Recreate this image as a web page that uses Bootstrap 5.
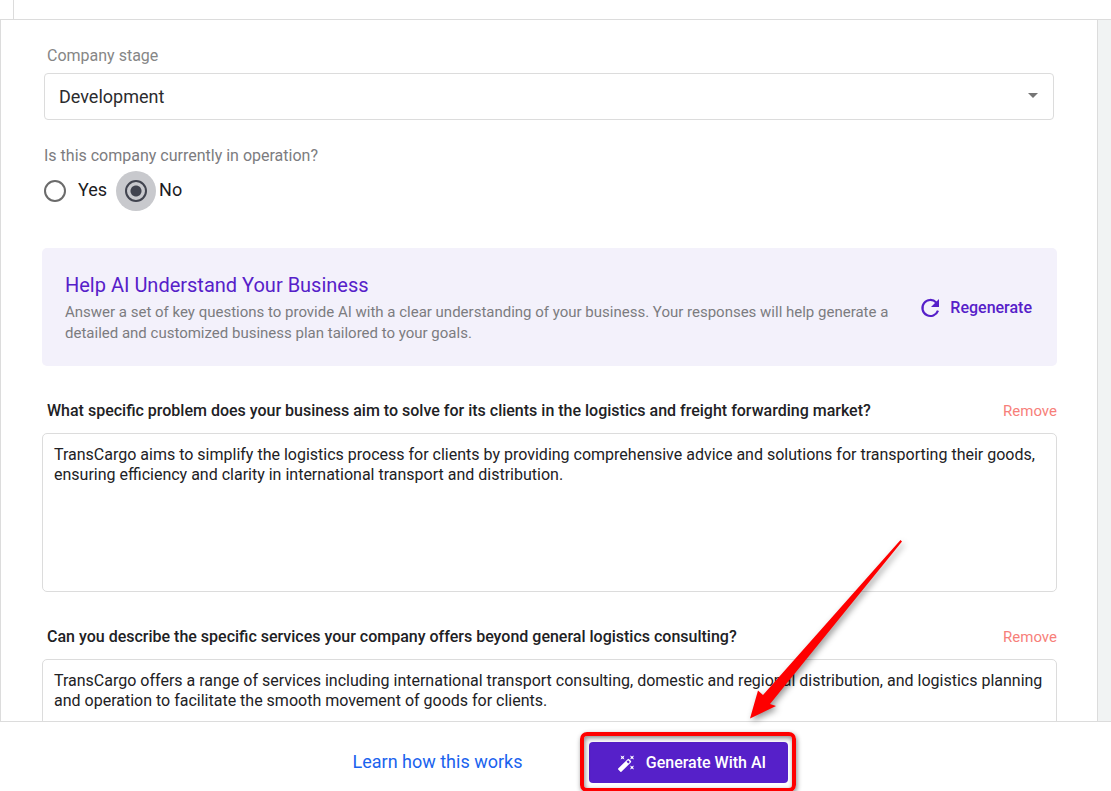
<!DOCTYPE html>
<html lang="en">
<head>
<meta charset="utf-8">
<meta name="viewport" content="width=device-width, initial-scale=1">
<title>Business plan setup</title>
<link href="https://cdn.jsdelivr.net/npm/bootstrap@5.3.0/dist/css/bootstrap.min.css" rel="stylesheet">
<style>
  :root { --line: #dcdcdc; --brand: #5620c9; --muted: #7c7c80; }
  body { font-family: Roboto, "Liberation Sans", sans-serif; font-size: 16px; line-height: 20px; color: #212124; }
  .line-b { border-bottom: 1px solid var(--line); }
  .top-strip { height: 20px; padding-left: 13px; }
  .top-cell { border-left: 1px solid var(--line); }
  .work-area { min-height: 0; background: #f1f3f3; }
  .form-panel { margin-right: 13px; padding: 26px 40px 0 41px; border: solid var(--line); border-width: 0 1px; background: #fff; }
  .company-fields { margin: 0 3px 46px 2px; }
  .field-label { color: #868686; }
  .stage-label { margin: 0 3px 7px; }
  .stage-select { height: 47px; padding: 0 40px 0 14px; font-size: 18px; color: #2b2b2e; background: #fff; border: 1px solid var(--line); border-radius: 4px; appearance: none; }
  .caret { right: 16px; top: 20px; pointer-events: none; }
  .operation { margin-top: 26px; }
  .operation legend { font-size: 16px; line-height: 20px; color: var(--muted); margin-bottom: 14px; }
  .choices { gap: 18px; }
  .choice { font-size: 18px; line-height: 20px; color: #1c1c1f; gap: 12px; }
  .choice input { appearance: none; width: 22px; height: 22px; margin: 0; border: 2px solid #6b6b6b; border-radius: 50%; }
  .choice input:checked { border-color: #41444f; background: radial-gradient(circle, #41444f 5px, transparent 6px) #c8c9cd; box-shadow: 0 0 0 9px #c8c9cd; }
  .ai-banner { padding: 24px 25px 22px 23px; background: #f3f1fb; border-radius: 5px; }
  .ai-banner h2 { font-size: 20px; line-height: 26px; font-weight: 400; color: var(--brand); margin: 0 0 4px; }
  .ai-banner p { font-size: 15px; line-height: 21px; color: var(--muted); max-width: 836px; }
  .regen { color: var(--brand); font-weight: 500; gap: 10px; }
  .question { margin-top: 35px; }
  .question label { margin-left: 5px; font-weight: 500; }
  .remove { color: #f77f7a; font-size: 15px; }
  .answer { height: 159px; margin-top: 12px; padding: 11px; color: #212124; border: 1px solid var(--line); border-radius: 5px; resize: none; overflow: hidden; }
  .foot { height: 70px; padding: 20px 0 0 30px; gap: 67px; border-top: 1px solid var(--line); background: #fff; }
  .learn { font-size: 18px; line-height: 40px; color: #1a63ee; }
  .generate { height: 41px; width: 199px; padding: 0 0 0 4px; gap: 10px; color: #fff; font-weight: 500; background: var(--brand); border-radius: 4px; }
  .callout-frame { inset: -10px -8px -9px -9px; border: 4px solid #fe0000; border-radius: 7px; box-shadow: 1px 2px 5px #0007, inset 1px 2px 5px #0007; pointer-events: none; }
  .callout-arrow { left: 151px; bottom: 60px; pointer-events: none; overflow: visible; filter: drop-shadow(2px 3px 3px #0006); }
</style>
</head>
<body>
<div class="d-flex flex-column vh-100 overflow-hidden">
  <header class="top-strip line-b d-flex flex-shrink-0"><div class="top-cell flex-fill"></div></header>

  <main class="work-area flex-fill overflow-hidden">
    <form class="form-panel">
      <section class="company-fields">
        <label class="field-label stage-label d-block" for="stage">Company stage</label>
        <div class="position-relative">
          <select id="stage" class="stage-select w-100 d-block"><option>Development</option></select>
          <svg class="caret position-absolute" width="10" height="5" viewBox="0 0 10 5" aria-hidden="true"><path d="M0 0h10L5 5z" fill="#757575"/></svg>
        </div>
        <fieldset class="operation">
          <legend>Is this company currently in operation?</legend>
          <div class="choices d-flex">
            <div class="choice d-flex"><input type="radio" name="operating" id="yes"><label for="yes">Yes</label></div>
            <div class="choice d-flex"><input type="radio" name="operating" id="no" checked><label for="no">No</label></div>
          </div>
        </fieldset>
      </section>

      <section class="ai-banner d-flex align-items-center justify-content-between">
        <div>
          <h2>Help AI Understand Your Business</h2>
          <p class="mb-0">Answer a set of key questions to provide AI with a clear understanding of your business. Your responses will help generate a detailed and customized business plan tailored to your goals.</p>
        </div>
        <button type="button" class="regen btn border-0 p-0 d-flex align-items-center flex-shrink-0">
          <svg width="20" height="20" viewBox="0 0 20 20" aria-hidden="true"><path d="M16.200 4.400A8 8 0 1 0 18 12.600" fill="none" stroke="currentColor" stroke-width="2.200"/><path d="M19 1v8h-8z" fill="currentColor"/></svg>
          <span>Regenerate</span>
        </button>
      </section>

      <section class="question">
        <div class="d-flex justify-content-between">
          <label for="q1">What specific problem does your business aim to solve for its clients in the logistics and freight forwarding market?</label>
          <a class="remove text-decoration-none" href="#">Remove</a>
        </div>
        <textarea id="q1" class="answer w-100 d-block">TransCargo aims to simplify the logistics process for clients by providing comprehensive advice and solutions for transporting their goods, ensuring efficiency and clarity in international transport and distribution.</textarea>
      </section>

      <section class="question">
        <div class="d-flex justify-content-between">
          <label for="q2">Can you describe the specific services your company offers beyond general logistics consulting?</label>
          <a class="remove text-decoration-none" href="#">Remove</a>
        </div>
        <textarea id="q2" class="answer w-100 d-block">TransCargo offers a range of services including international transport consulting, domestic and regional distribution, and logistics planning and operation to facilitate the smooth movement of goods for clients.</textarea>
      </section>
    </form>
  </main>

  <footer class="foot d-flex justify-content-center align-items-start flex-shrink-0">
    <a class="learn text-decoration-none" href="#">Learn how this works</a>
    <div class="position-relative">
      <button type="button" class="generate btn border-0 d-flex align-items-center justify-content-center">
        <svg width="20" height="20" viewBox="0 0 20 20" fill="currentColor" aria-hidden="true">
          <path d="M2.200 15.600 11.600 6.200q.8-.8 1.600 0l1.600 1.600q.8.8 0 1.600l-9.400 9.400q-.5.500-1 0l-2.200-2.200q-.5-.5 0-1zM10.600 8.800l1.700 1.700 1.500-1.500-1.700-1.700z" fill-rule="evenodd"/>
          <path d="m4.500 2.500 2 1 2-1-1 2 1 2-2-1-2 1 1-2zM14 2.500l2 1 2-1-1 2 1 2-2-1-2 1 1-2zM14 12.500l2 1 2-1-1 2 1 2-2-1-2 1 1-2z"/>
        </svg>
        <span>Generate With AI</span>
      </button>
      <div class="callout-frame position-absolute"></div>
      <svg class="callout-arrow position-absolute" width="162" height="188" viewBox="740 535 162 188" aria-hidden="true"><path d="M900.500 540 902 541.500 770 704 776 706 750 718.500 758 690.500 763 695z" fill="#fe0000"/></svg>
    </div>
  </footer>
</div>
<script src="https://cdn.jsdelivr.net/npm/bootstrap@5.3.0/dist/js/bootstrap.bundle.min.js"></script>
</body>
</html>
